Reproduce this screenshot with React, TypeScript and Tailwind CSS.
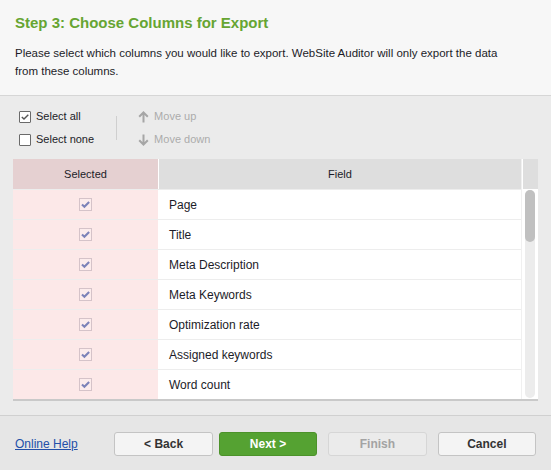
import React from 'react';

const fields = [
  'Page',
  'Title',
  'Meta Description',
  'Meta Keywords',
  'Optimization rate',
  'Assigned keywords',
  'Word count',
];

const CheckIcon = ({ color, w = 1.8, size = 10 }: { color: string; w?: number; size?: number }) => (
  <svg width={size} height={size} viewBox="0 0 10 10">
    <path d="M1.8 5 L4 7.1 L8.3 2.8" fill="none" stroke={color} strokeWidth={w} />
  </svg>
);

const Arrow = ({ down }: { down?: boolean }) => (
  <svg width="11" height="12" viewBox="0 0 11 12" className={down ? 'rotate-180' : ''}>
    <path d="M5.5 1.5 V11.5 M1.2 5.8 L5.5 1.5 L9.8 5.8" fill="none" stroke="#a6a6a6" strokeWidth="2" />
  </svg>
);

export default function App() {
  return (
    <div className="w-[551px] h-[470px] flex flex-col bg-[#ebebeb] text-[11px] text-[#1c1c28] overflow-hidden" style={{ fontFamily: '"Liberation Sans", Arial, sans-serif' }}>
      <div className="bg-[#f7f7f7] border-b border-[#d6d6d6] px-[15px] pt-[13px] h-[96px]">
        <h1 className="text-[15px] leading-[20px] font-bold text-[#66a532]">Step 3: Choose Columns for Export</h1>
        <p className="mt-[11px] text-[11.5px] leading-[18px] max-w-[490px]">
          Please select which columns you would like to export. WebSite Auditor will only export the data from these columns.
        </p>
      </div>

      <div className="flex-1 flex flex-col px-[13px]">
        <div className="flex items-center h-[63px] pt-[1px]">
          <div className="flex flex-col gap-[9px] pl-[6px]">
            <label className="flex items-center gap-[5px] h-[14px]">
              <span className="w-[12px] h-[12px] border border-[#6a6a6a] bg-white flex items-center justify-center rounded-[1px]">
                <CheckIcon color="#555" w={1.4} size={10} />
              </span>
              Select all
            </label>
            <label className="flex items-center gap-[5px] h-[14px]">
              <span className="w-[12px] h-[12px] border border-[#6a6a6a] bg-white rounded-[1px]" />
              Select none
            </label>
          </div>
          <div className="w-px h-[24px] bg-[#cfcfcf] ml-[22px]" />
          <div className="flex flex-col gap-[9px] ml-[21px] text-[#ababab]">
            <div className="flex items-center gap-[5px] h-[14px]">
              <Arrow />
              Move up
            </div>
            <div className="flex items-center gap-[5px] h-[14px]">
              <Arrow down />
              Move down
            </div>
          </div>
        </div>

        <div className="bg-white border-b-2 border-[#c9c9c9] flex">
          <div className="flex-1">
            <div className="flex h-[30px]">
              <div className="w-[145px] bg-[#e5d0d1] flex items-center justify-center">Selected</div>
              <div className="w-px bg-white" />
              <div className="flex-1 bg-[#dedede] flex items-center justify-center">Field</div>
            </div>
            {fields.map((f) => (
              <div key={f} className="flex h-[30px] border-t border-[#ededed] first:border-t-0">
                <div className="w-[145px] bg-[#fce8e8] flex items-center justify-center">
                  <span className="w-[13px] h-[13px] border border-[#d5c3c9] bg-[#fcecec] flex items-center justify-center">
                    <CheckIcon color="#7c83b8" w={1.9} size={11} />
                  </span>
                </div>
                <div className="w-px bg-white" />
                <div className="flex-1 flex items-center pl-[10px] text-[12px]">{f}</div>
              </div>
            ))}
          </div>
          <div className="w-[17px] border-l border-[#f0f0f0] flex flex-col">
            <div className="h-[30px] bg-[#dedede] border-l border-white" />
            <div className="flex-1 bg-white px-[3px] py-[1px]">
              <div className="h-full bg-[#ececec] rounded-full">
                <div className="h-[52px] bg-[#c0c0c0] rounded-full" />
              </div>
            </div>
          </div>
        </div>
      </div>

      <div className="h-[55px] bg-[#e6e6e6] border-t border-[#d0d0d0] flex items-center px-[15px] pt-[1px] text-[12px]">
        <a className="text-[#2350a8] underline w-[100px]">Online Help</a>
        <button className="w-[99px] h-[24px] rounded-[3px] border border-[#c4c4c4] bg-[#f4f4f4] font-bold text-[#333]">&lt; Back</button>
        <button className="w-[99px] h-[24px] rounded-[3px] border border-[#4c922a] bg-[#55a232] font-bold text-white ml-[6px]">Next &gt;</button>
        <button className="w-[99px] h-[24px] rounded-[3px] border border-[#d6d6d6] bg-[#ebebeb] font-bold text-[#a3a3a3] ml-[11px]">Finish</button>
        <button className="w-[99px] h-[24px] rounded-[3px] border border-[#c4c4c4] bg-[#f4f4f4] font-bold text-[#333] ml-[11px]">Cancel</button>
      </div>
    </div>
  );
}
